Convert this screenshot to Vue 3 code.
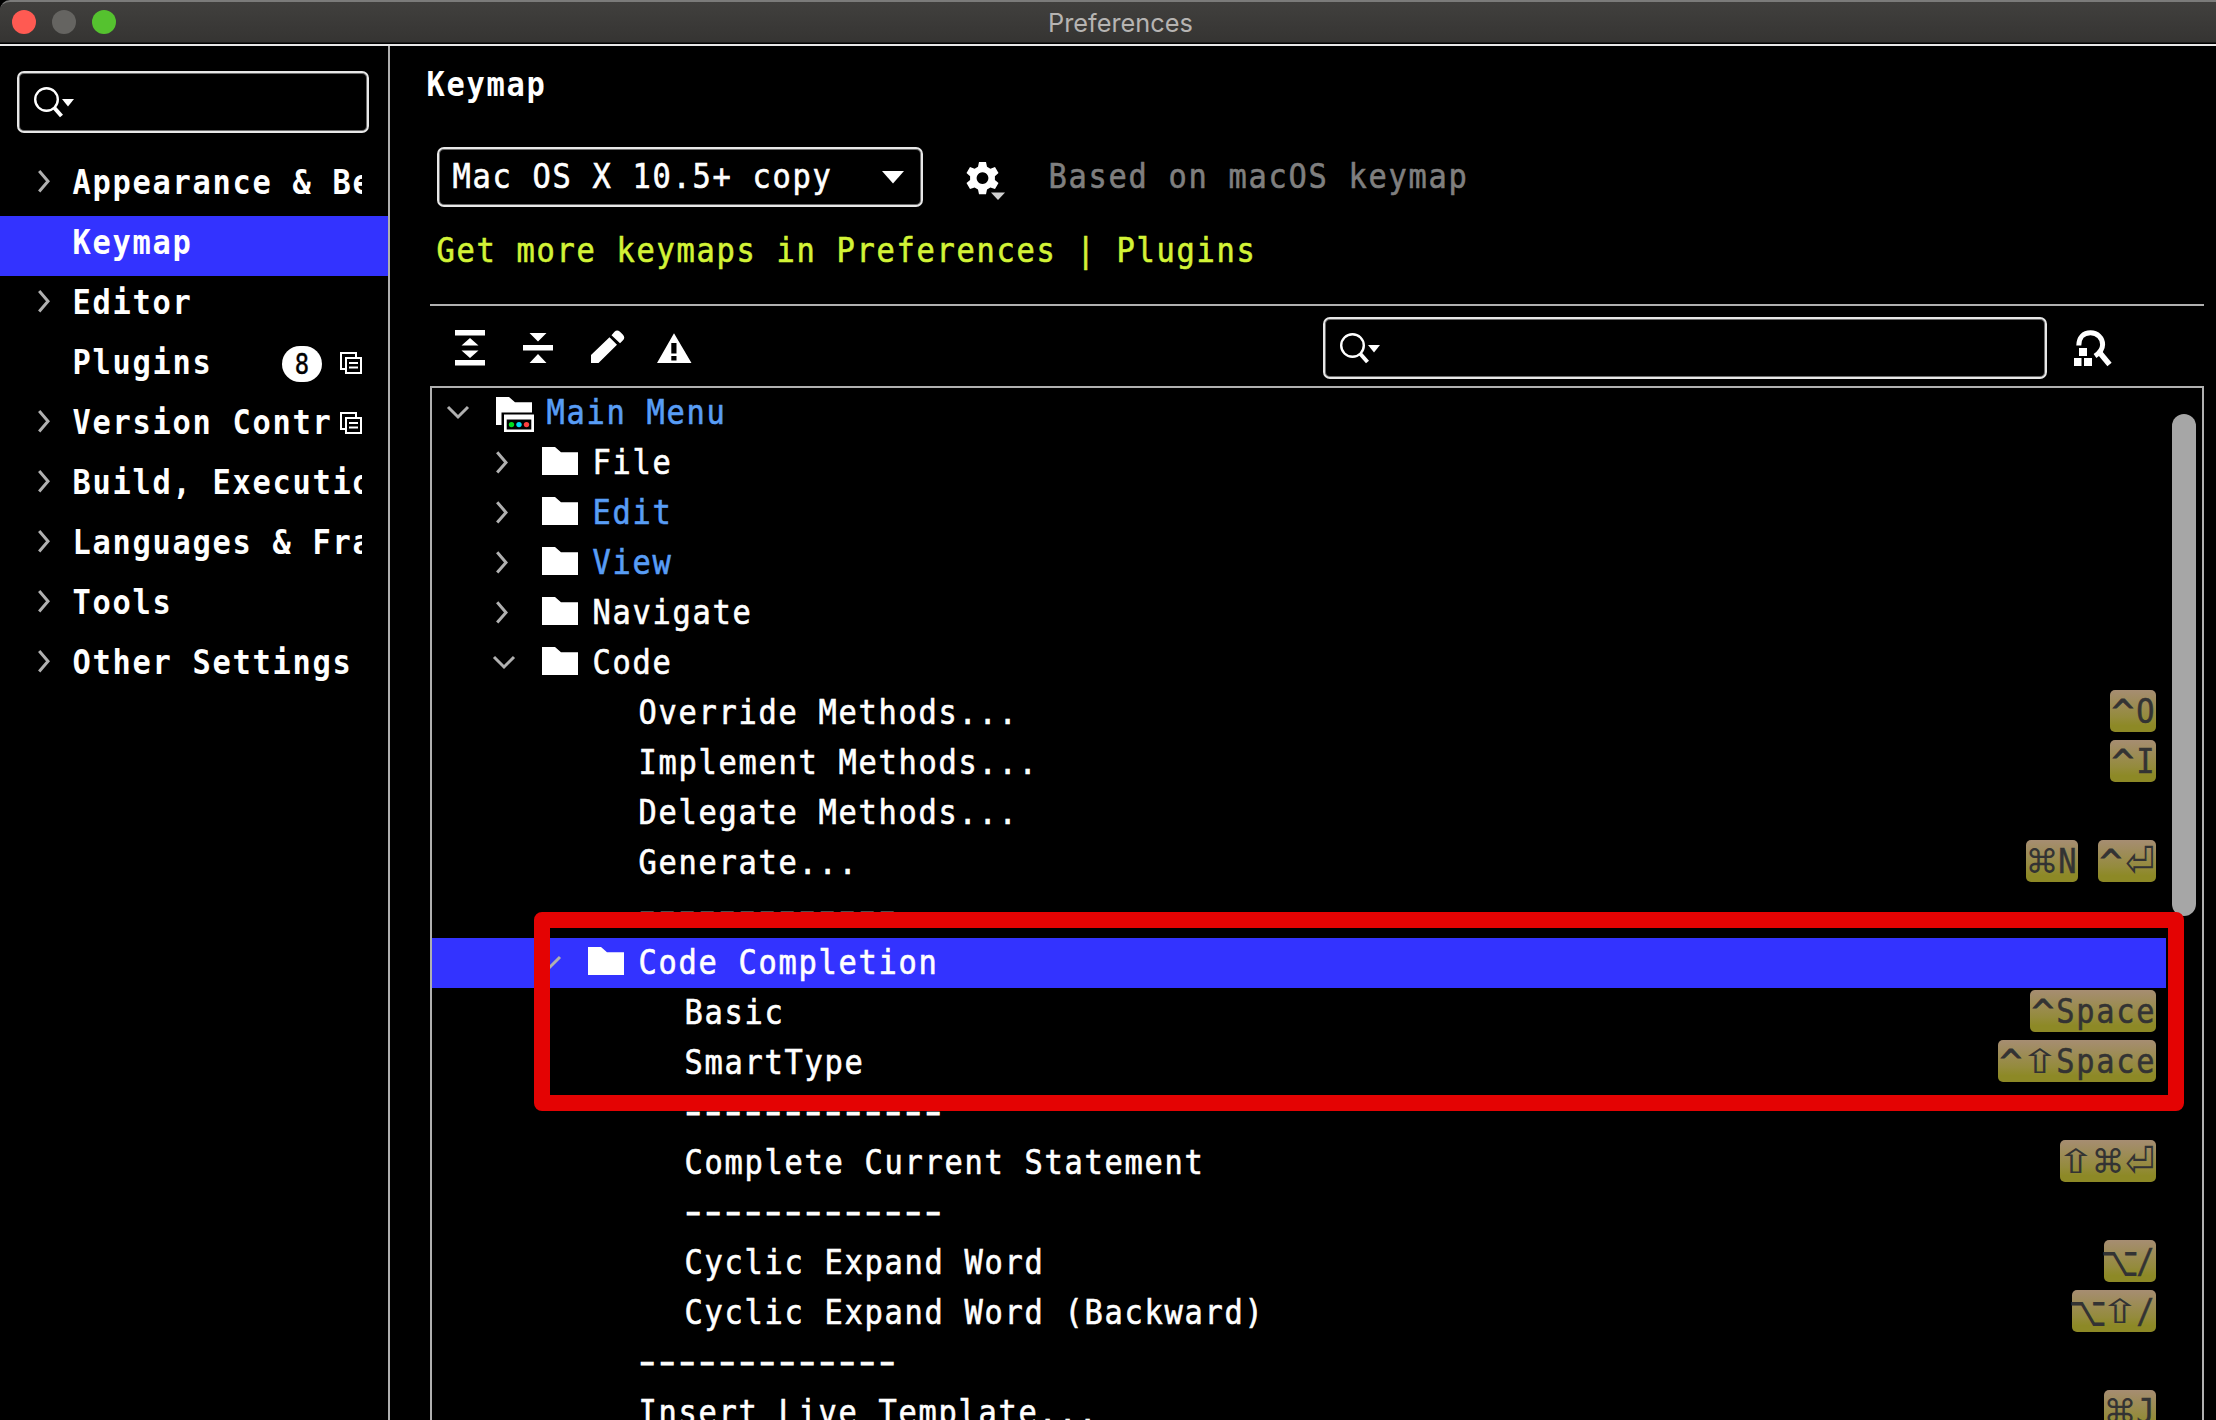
<script setup>
const sections = [
  { label: 'Appearance & Behavior', arrow: true },
  { label: 'Keymap', selected: true },
  { label: 'Editor', arrow: true },
  { label: 'Plugins', badge: '8', project: true },
  { label: 'Version Control', arrow: true, project: true },
  { label: 'Build, Execution, Deployment', arrow: true },
  { label: 'Languages & Frameworks', arrow: true },
  { label: 'Tools', arrow: true },
  { label: 'Other Settings', arrow: true },
]

const dashes = '-------------'
const rows = [
  { level: 0, kind: 'menu', open: true, label: 'Main Menu', changed: true },
  { level: 1, kind: 'folder', label: 'File' },
  { level: 1, kind: 'folder', label: 'Edit', changed: true },
  { level: 1, kind: 'folder', label: 'View', changed: true },
  { level: 1, kind: 'folder', label: 'Navigate' },
  { level: 1, kind: 'folder', open: true, label: 'Code' },
  { level: 2, label: 'Override Methods...', keys: [['^', 'O']] },
  { level: 2, label: 'Implement Methods...', keys: [['^', 'I']] },
  { level: 2, label: 'Delegate Methods...' },
  { level: 2, label: 'Generate...', keys: [['⌘', 'N'], ['^', '⏎']] },
  { level: 2, label: dashes, separator: true },
  { level: 2, kind: 'folder', open: true, label: 'Code Completion', selected: true },
  { level: 3, label: 'Basic', keys: [['^', 'Space']] },
  { level: 3, label: 'SmartType', keys: [['^', '⇧', 'Space']] },
  { level: 3, label: dashes, separator: true },
  { level: 3, label: 'Complete Current Statement', keys: [['⇧', '⌘', '⏎']] },
  { level: 3, label: dashes, separator: true },
  { level: 3, label: 'Cyclic Expand Word', keys: [['⌥', '/']] },
  { level: 3, label: 'Cyclic Expand Word (Backward)', keys: [['⌥', '⇧', '/']] },
  { level: 2, label: dashes, separator: true },
  { level: 2, label: 'Insert Live Template...', keys: [['⌘', 'J']] },
]

const classes = { '^': 'ctrl', '⌘': 'sym cmd', '⇧': 'sym shift', '⌥': 'sym opt', '⏎': 'sym enter' }
const partClass = (part) => classes[part] || 'word'
const partStyle = (part) => (classes[part] ? null : { width: part.length * 20 + 'px' })
</script>

<template>
  <div class="window">
    <header class="titlebar">
      <i class="light red"></i><i class="light gray"></i><i class="light green"></i>
      <span class="title">Preferences</span>
    </header>

    <div class="body">
      <aside class="sidebar">
        <div class="search side-search">
          <svg width="48" height="40" viewBox="0 0 48 40">
            <circle cx="16.5" cy="17.5" r="11.3" fill="none" stroke="#fff" stroke-width="2.4" />
            <path d="M24 25.5L31.5 34" stroke="#fff" stroke-width="4" />
            <path d="M32 17h12l-6 7.5z" fill="#fff" />
          </svg>
        </div>
        <div v-for="s in sections" :key="s.label" class="section" :class="{ selected: s.selected }">
          <span class="arrow">
            <svg v-if="s.arrow" width="12" height="24" viewBox="0 0 12 24">
              <path d="M1.2 2L10 12.2L1.2 22.4" fill="none" stroke="#b0b0b0" stroke-width="3" />
            </svg>
          </span>
          <span class="clip"><span class="mono">{{ s.label }}</span></span>
          <span v-if="s.badge" class="badge"><span class="count">{{ s.badge }}</span></span>
          <svg v-if="s.project" class="project" width="22" height="22" viewBox="0 0 22 22" fill="none" stroke="#fff" stroke-width="2">
            <path d="M5 17H1V1h15v4" />
            <path d="M6 6h15v15H6z" />
            <path d="M9 11h9M9 15.5h9" />
          </svg>
        </div>
      </aside>

      <main class="main">
        <h1 class="heading"><span class="mono">Keymap</span></h1>
        <div class="scheme">
          <div class="combo">
            <span class="mono">Mac OS X 10.5+ copy</span>
            <svg width="22" height="13" viewBox="0 0 22 13"><path d="M0 0h22L11 12.5z" fill="#fff" /></svg>
          </div>
          <svg class="gear" width="40" height="40" viewBox="0 0 40 40">
            <path fill="#fff" fill-rule="evenodd" d="M12 0h7l1 4.7 3.4 2 4.6-1.6 3.5 6-3.6 3.2v3.6l3.6 3.2-3.5 6-4.6-1.6-3.4 2-1 4.7h-7l-1-4.7-3.4-2L3 27.1l-3.5-6 3.6-3.2v-3.6L-.5 11.1 3 5.1l4.6 1.6 3.4-2zM15.5 10.2a5.9 5.9 0 1 0 .01 0z" />
            <path d="M24 30.5h14l-7 7.5z" fill="#d0d0d0" />
          </svg>
          <span class="based"><span class="mono">Based on macOS keymap</span></span>
        </div>
        <div class="link"><span class="mono">Get more keymaps in Preferences | Plugins</span></div>

        <div class="toolbar">
          <svg class="tools" width="240" height="40" viewBox="0 0 240 40" fill="#fff">
            <path d="M0 2h30v5.6H0zM0 32h30v5.6H0zM15 10l8.5 7.6h-17zM15 30l8.5-7.600h-17z" />
            <path d="M68 17h30v5.6H68zM83 13.5l8.5-8.5h-17zM83 26l8.5 9h-17z" />
            <path d="M136 27L154.5 9.3l7.5 7.5L143.5 35H136zM156.5 7.3l3-3.5q2.5-2.500 5.500 0l3 3q2.500 3 0 5.500l-3 3z" />
            <path fill-rule="evenodd" d="M219 5.3L236.5 35h-34.5zM216.3 15v10.5h5.2V15zM216.3 28v4.5h5.2V28z" />
          </svg>
          <div class="search tree-search">
            <svg width="48" height="40" viewBox="0 0 48 40">
              <circle cx="16.5" cy="17.5" r="11.3" fill="none" stroke="#fff" stroke-width="2.4" />
              <path d="M24 25.5L31.5 34" stroke="#fff" stroke-width="4" />
              <path d="M32 17h12l-6 7.5z" fill="#fff" />
            </svg>
          </div>
          <svg class="find" width="40" height="38" viewBox="0 0 40 38">
            <path d="M4.8 15.5C4.8 7.5 9.5 2.7 16.5 2.7S28.6 8 28.6 14.5c0 5-2.6 8.2-7.6 11.5" fill="none" stroke="#fff" stroke-width="5" />
            <path d="M26 23l9.5 11.5" stroke="#fff" stroke-width="5.5" />
            <path d="M5 18h8v8H5zM0 28h7.5v8H0zM10 28h8v8h-8z" fill="#fff" />
          </svg>
        </div>

        <div class="tree">
          <div class="rows">
            <div v-for="(r, i) in rows" :key="i" class="row" :class="['l' + r.level, { selected: r.selected, changed: r.changed, sep: r.separator }]">
              <span v-if="r.kind" class="toggle">
                <svg v-if="r.open" width="24" height="14" viewBox="0 0 24 14">
                  <path d="M2 1L12 11L22 1" fill="none" stroke="#b0b0b0" stroke-width="3" />
                </svg>
                <svg v-else width="24" height="24" viewBox="0 0 24 24">
                  <path d="M5.2 1.2L14 11.4L5.2 21.6" fill="none" stroke="#b0b0b0" stroke-width="3" />
                </svg>
              </span>
              <svg v-if="r.kind" class="folder" width="40" height="38" viewBox="0 0 40 38">
                <path d="M0 0h13l6 5.2h17V28H0z" fill="#fff" />
                <g v-if="r.kind === 'menu'">
                  <path d="M5.5 15.5H40V38H5.500z" fill="#000" />
                  <path d="M8 17.5h30V35H8z" fill="#fff" />
                  <path d="M10.7 22.5h24.6v10H10.700z" fill="#000" />
                  <circle cx="15.5" cy="27.6" r="2.7" fill="#00e020" />
                  <circle cx="23" cy="27.6" r="2.7" fill="#00dcf5" />
                  <circle cx="30.5" cy="27.6" r="2.7" fill="#ff4040" />
                </g>
              </svg>
              <span class="name"><span class="mono">{{ r.label }}</span></span>
              <span v-if="r.keys" class="keys">
                <kbd v-for="(k, j) in r.keys" :key="j"><span v-for="p in k" :key="p" :class="partClass(p)" :style="partStyle(p)"><span class="glyph">{{ p }}</span></span></kbd>
              </span>
            </div>
          </div>
          <div class="thumb"></div>
        </div>
      </main>
    </div>
    <div class="highlight"></div>
  </div>
</template>

<style>
body { background: #000; overflow: hidden; }
</style>

<style scoped>
* { box-sizing: border-box; }
svg { display: block; flex: none; overflow: visible; }
.window { position: relative; width: 2216px; height: 1420px; overflow: hidden; background: #000; color: #fff; display: flex; flex-direction: column; font: 33px "DejaVu Sans Mono", monospace; }
.mono { display: inline-block; white-space: pre; font-size: 33px; letter-spacing: 1.87px; transform: translate(.5px, 0) scaleX(.92); transform-origin: 0 50%; -webkit-text-stroke: .6px currentColor; }

.titlebar { position: relative; flex: none; height: 46px; border-top: 2px solid #7b7b7a; border-bottom: 2px solid #e8e8e8; background: linear-gradient(#41403e, #353432 40px, #000 41px); border-radius: 10px 0 0 0; display: flex; align-items: center; gap: 16px; padding-left: 12px; padding-bottom: 2px; }
.light { width: 24px; height: 24px; border-radius: 50%; }
.red { background: #ff5a52; }
.gray { background: #656461; }
.green { background: #55c22f; }
.title { margin-left: 916px; padding-top: 2px; font: 25.3px/40px Inter, sans-serif; color: #b6b4b2; }

.body { flex: 1; display: flex; min-height: 0; }
.sidebar { width: 390px; flex: none; border-right: 2px solid #afafaf; padding-top: 25px; }
.search { height: 62px; border: 2px solid #e8e8e8; border-radius: 7px; box-shadow: inset 0 0 0 1px #6c6c6c; padding: 9px 0 0 11px; }
.side-search { width: 352px; margin: 0 0 23px 17px; }
.section { height: 60px; display: flex; align-items: flex-start; padding: 0 26px 0 38px; font-weight: bold; line-height: 54px; }
.section .mono, .heading .mono { -webkit-text-stroke: 0; }
.section.selected, .row.selected { background: #3333ff; }
.arrow { width: 34px; flex: none; padding-top: 13px; }
.clip { flex: 1; min-width: 0; overflow: hidden; height: 60px; }
.badge { width: 40px; height: 36px; margin: 10px 10px 0 0; border-radius: 18px; background: #fff; color: #000; font-size: 29px; font-weight: normal; line-height: 37px; text-align: center; }
.count { display: block; transform: scaleX(.82); -webkit-text-stroke: .4px #000; }
.project { margin: 16px 0 0 8px; }

.main { flex: 1; padding-left: 40px; display: flex; flex-direction: column; }
.heading { margin: 0 0 0 -4px; height: 101px; padding-top: 14px; font-size: 33px; line-height: 50px; }
.scheme { display: flex; height: 60px; padding-left: 7px; }
.combo { width: 486px; height: 60px; border: 2px solid #e8e8e8; border-radius: 7px; box-shadow: inset 0 0 0 1px #6c6c6c; display: flex; align-items: center; justify-content: space-between; padding: 0 17px 0 13px; line-height: 54px; }
.combo .mono { width: 420px; }
.gear { margin: 15px 0 0 44px; }
.based { margin-left: 41px; color: #7f7f7f; line-height: 60px; }
.link { height: 97px; padding: 14px 0 0 6px; line-height: 60px; color: #d3f336; }
.toolbar { height: 82px; margin-right: 12px; border-top: 2px solid #b0b0b0; display: flex; align-items: flex-start; }
.tools { margin: 22px 0 0 25px; }
.tree-search { width: 724px; margin: 11px 0 0 628px; }
.find { margin: 24px 0 0 27px; }

.tree { position: relative; flex: 1; min-height: 0; overflow: hidden; margin-right: 12px; border: 2px solid #b0b0b0; border-bottom: 0; }
.rows { width: 1734px; }
.row { height: 50px; line-height: 50px; display: flex; align-items: flex-start; padding-right: 10px; }
.l0 { padding-left: 14px; }
.l1 { padding-left: 60px; }
.l2 { padding-left: 206px; }
.l3 { padding-left: 252px; }
.row.selected { padding-left: 106px; }
.toggle { width: 50px; height: 50px; flex: none; display: flex; align-items: center; }
.folder { margin-top: 9px; }
.folder + .name { margin-left: 10px; }
.name { flex: 1; }
.changed .name { color: #589df6; }
.sep .mono { transform: translate(-4.5px, -1px) scaleX(1.38); letter-spacing: -5.375px; -webkit-text-stroke: 1px #fff; }
.keys { display: flex; gap: 20px; padding-top: 2px; }
kbd { height: 42px; display: flex; border-radius: 5px; background: linear-gradient(#a68d72, #948b3c 65%, #8d8926 85%); color: #333; font-family: inherit; line-height: 44px; }
.ctrl, .sym, .word { display: flex; justify-content: center; white-space: pre; }
.ctrl { width: 26px; }
.ctrl .glyph { -webkit-text-stroke: .8px #333; transform: translateY(.5px) scaleX(1.12); }
.sym { width: 32px; font-family: "DejaVu Sans", sans-serif; font-size: 33px; }
.shift .glyph { transform: translate(0, 0) scaleX(1.45); }
.enter .glyph { transform: scale(1.06, 1.3); }
.opt .glyph { transform: scaleY(1.25); }
.word { justify-content: flex-start; }
.word .glyph { letter-spacing: 1.87px; transform: translate(.3px, .2px) scaleX(.92); transform-origin: 0 50%; -webkit-text-stroke: .5px #333; }
.glyph { display: block; }

.thumb { position: absolute; right: 6px; top: 26px; width: 24px; height: 502px; border-radius: 12px; background: #a6a6a6; }
.highlight { position: absolute; left: 534px; top: 912px; width: 1650px; height: 199px; border: 16px solid #e40303; border-radius: 8px; }
</style>
